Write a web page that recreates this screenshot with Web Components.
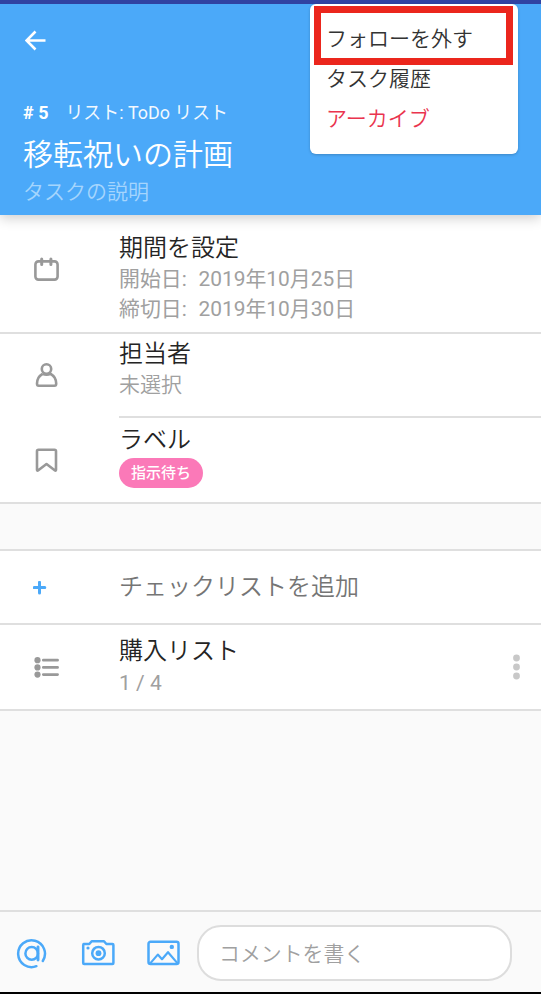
<!DOCTYPE html>
<html lang="ja">
<head>
<meta charset="utf-8">
<title>移転祝いの計画</title>
<style>
html,body{margin:0;height:994px;overflow:hidden;background:#fff}
body{font-family:Roboto,"Noto Sans CJK JP",sans-serif;font-weight:350}
</style>
</head>
<body>
<task-screen></task-screen>
<script>
const define = (name, html) => customElements.define(name, class extends HTMLElement {
  constructor() {
    super();
    const t = document.createElement('template');
    t.innerHTML = html;
    this.attachShadow({mode: 'open'}).append(t.content.cloneNode(true));
  }
});

const icons = {
  back: [22, 22, '<path d="M10.5 1.5 1.5 10.5l9 9M1.5 10.5h19" stroke="#fff" stroke-width="2.6"/>'],
  calendar: [26, 26, '<rect x="1.4" y="4.4" width="22.2" height="18.2" rx="3" stroke-width="2.6"/><path d="M7.7 2v5.5M16.9 2v5.5" stroke-width="3" stroke-linecap="round"/>'],
  person: [26, 26, '<circle cx="12.5" cy="6" r="4.7" stroke-width="2.6"/><path d="M8.5 10.8C5.2 12.8 3 15.9 3 20.5q0 2.3 1.7 2.3h15.8q1.7 0 1.7-2.3c0-4.6-2.2-7.7-5.5-9.7q-4.1 1.6-8.2 0" stroke-width="2.6"/>'],
  bookmark: [26, 26, '<path d="M3 3.2q0-1.5 1.5-1.5h16q1.5 0 1.5 1.5v18.5q0 1.6-1.3.6L12.5 16l-8.2 6.3q-1.3 1-1.3-.6Z" stroke-width="2.6" stroke-linejoin="round"/>'],
  list: [26, 26, '<path d="M9.3 5.2h14.3M9.3 12.4h14.3M9.3 19.6h14.3" stroke-width="2.7" stroke-linecap="round"/><g fill="#999" stroke="none"><circle cx="3.5" cy="5.2" r="3.1"/><circle cx="3.5" cy="12.4" r="3.1"/><circle cx="3.5" cy="19.6" r="3.1"/></g>'],
  plus: [14, 14, '<path d="M6.5 1.3v10.6M1.2 6.6h10.6" stroke="#4ba9f9" stroke-width="3" stroke-linecap="round"/>'],
  more: [8, 26, '<g fill="#c8c8c8" stroke="none"><circle cx="4.5" cy="4" r="3.4"/><circle cx="4.5" cy="13" r="3.4"/><circle cx="4.5" cy="22" r="3.4"/></g>'],
  mention: [32, 32, '<g stroke="#4ba9f9" stroke-width="2.5" stroke-linecap="round"><path d="M20.4 28.2A13.4 13.4 0 1 1 26.8 23"/><circle cx="15.7" cy="15.4" r="6.3"/><path d="M22 9v13" stroke-width="2.9"/></g>'],
  camera: [34, 30, '<g stroke="#4ba9f9" stroke-width="2.5" stroke-linejoin="round"><path d="M2.7 5h5.6l2.4-2.8H23l2.4 2.8h6q1 0 1 1V24.1q0 1-1 1H3.2q-1 0-1-1V6q0-1 1-1Z"/><circle cx="17.5" cy="14.2" r="6.3"/></g><g fill="#4ba9f9" stroke="none"><circle cx="17.5" cy="14.2" r="2.9"/><circle cx="7" cy="9" r="1.6"/></g>'],
  picture: [34, 28, '<g stroke="#4ba9f9" stroke-width="2.5" stroke-linejoin="round"><rect x="1.5" y="1.7" width="30" height="22.2" rx="2"/><path d="m3 23.6 7.8-9 4.2 4.6 6-7 9.6 11.2" stroke-width="2.2"/></g><circle cx="24.8" cy="6.9" r="2.2" fill="#4ba9f9" stroke="none"/>']
};
customElements.define('ui-icon', class extends HTMLElement {
  connectedCallback() {
    const [w, h, body] = icons[this.getAttribute('name')];
    (this.shadowRoot || this.attachShadow({mode: 'open'})).innerHTML =
      `<style>:host{display:block;flex:none}svg{display:block}</style>
       <svg width="${w}" height="${h}" viewBox="0 0 ${w} ${h}" fill="none" stroke="#999">${body}</svg>`;
  }
});

define('action-menu', `<style>
:host{display:block;box-sizing:border-box;width:208px;height:150px;padding:15px 0 0 16px;background:#fff;border-radius:6px;box-shadow:0 1px 3px #0003;color:#333;font-size:21px;line-height:40px}
.mark{position:absolute;left:4px;top:2px;width:199px;height:59px;box-sizing:border-box;border:7px solid #eb261d}
::slotted(*){display:block}
</style><slot></slot><div class="mark"></div>`);

define('task-header', `<style>
:host{display:flex;flex-direction:column;height:215px;box-sizing:border-box;border-top:4px solid #3042a2;background:#4ba9f9;color:#fff;padding:26px 0 0 23px;position:relative;z-index:1;box-shadow:0 3px 12px #0003}
ui-icon{margin-left:2px}
.meta{display:flex;gap:17px;margin-top:49px;font-size:17.9px;line-height:24px;height:24px;white-space:nowrap;font-weight:400}
b{font-size:18px;font-weight:700}
.meta span{opacity:.93}
h1{margin:10px 0 0;font-size:30px;font-weight:inherit;line-height:40px;height:40px}
.desc{font-size:21px;line-height:30px;height:30px;margin-top:2px;color:#a5d5fd}
action-menu{position:absolute;left:310px;top:0}
</style>
<ui-icon name="back"></ui-icon>
<div class="meta"><b># 5</b><span>リスト: ToDo リスト</span></div>
<h1>移転祝いの計画</h1><div class="desc">タスクの説明</div>
<action-menu><span>フォローを外す</span><span>タスク履歴</span><span style="color:#ea344e">アーカイブ</span></action-menu>`);

define('task-row', `<style>
:host{display:grid;grid-template-columns:119px 1fr;box-sizing:border-box;background:#fff}
.icon{padding:var(--icon-top,24px) 0 0 var(--icon-left,34px)}
.body{border-bottom:var(--inset-line,0);position:relative;padding-top:var(--top,4px);box-sizing:border-box;font-size:21px;line-height:30px;color:#a0a0a0}
.title{font-size:24px;line-height:32px;height:32px;color:var(--title,#242424)}
.end{position:absolute;right:21px;top:29px}
</style><div class="icon"><slot name="icon"></slot></div>
<div class="body"><div class="title"><slot name="title"></slot></div><slot></slot><div class="end"><slot name="end"></slot></div></div>`);

define('label-pill', `<style>
:host{display:block;width:84px;height:30px;margin-top:2px;border-radius:15px;background:#fb79b8;color:#fff;font-size:15px;font-weight:500;line-height:30px;text-align:center}
</style><slot></slot>`);

define('comment-bar', `<style>
:host{display:flex;align-items:center;box-sizing:border-box;height:84px;border-top:2px solid #dfdfdf;border-bottom:2px solid #000;padding:1px 0 0 16px}
ui-icon{margin-top:2px}
.camera{margin-left:33px}.picture{margin-left:32px}
.field{box-sizing:border-box;width:315px;height:56px;margin-left:16px;border:2px solid #ddd;border-radius:24px;background:#fff;padding-left:20px;font-size:20.9px;line-height:54px;color:#a0a0a0}
</style><ui-icon name="mention"></ui-icon><ui-icon class="camera" name="camera"></ui-icon><ui-icon class="picture" name="picture"></ui-icon>
<div class="field">コメントを書く</div>`);

define('task-screen', `<style>
:host{display:flex;flex-direction:column;width:541px;height:994px;background:#fafafa;overflow:hidden}
task-header,task-row,comment-bar{flex:none}
.line{border-bottom:2px solid #dfdfdf}
.pre{white-space:pre;font-size:20.9px;word-spacing:.7px}
.pre,.count{font-weight:400}
.date{height:119px;--icon-top:42px;--top:17px}
.date div{line-height:30px;height:30px}
.person{height:84px;--icon-top:29px;--inset-line:2px solid #dfdfdf}
.label{height:86px;--icon-top:30px;--top:6px}
.add{height:76px;margin-top:45px;border-top:2px solid #dfdfdf;--icon-top:30px;--icon-left:33px;--top:20px;--title:#757575}
.check{height:86px;--icon-top:30px;--top:10px}
.count{padding-top:1px}
comment-bar{margin-top:auto}
</style>
<task-header></task-header>
<task-row class="date line"><ui-icon slot="icon" name="calendar"></ui-icon><span slot="title">期間を設定</span><div class="pre">開始日:  2019年10月25日</div><div class="pre">締切日:  2019年10月30日</div></task-row>
<task-row class="person"><ui-icon slot="icon" name="person"></ui-icon><span slot="title">担当者</span><div>未選択</div></task-row>
<task-row class="label line"><ui-icon slot="icon" name="bookmark"></ui-icon><span slot="title">ラベル</span><label-pill>指示待ち</label-pill></task-row>
<task-row class="add line"><ui-icon slot="icon" name="plus"></ui-icon><span slot="title">チェックリストを追加</span></task-row>
<task-row class="check line"><ui-icon slot="icon" name="list"></ui-icon><span slot="title">購入リスト</span><div class="count">1 / 4</div><ui-icon slot="end" name="more"></ui-icon></task-row>
<comment-bar></comment-bar>`);
</script>
</body>
</html>
